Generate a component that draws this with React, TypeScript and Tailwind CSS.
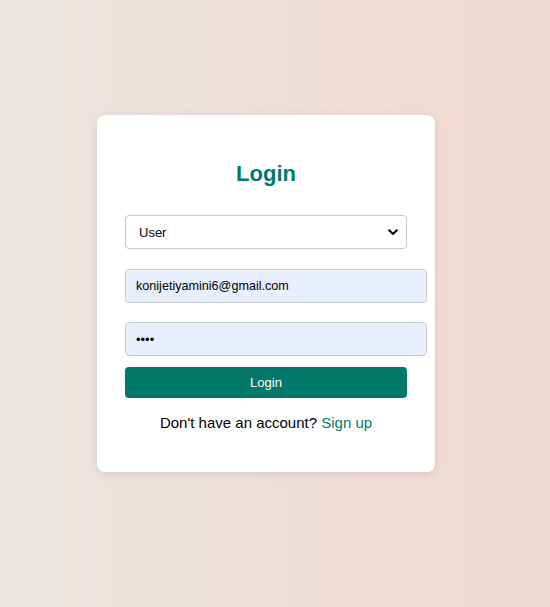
import React from "react";

export default function App() {
  return (
    <div
      className="min-h-[607px] w-full bg-[linear-gradient(to_right,#eae6e2,#f3d8cf)] pt-[115px] pl-[97px]"
      style={{ fontFamily: '"Liberation Sans", Arial, sans-serif' }}
    >
      <div className="w-[338px] h-[357px] bg-white rounded-[8px] shadow-[0_2px_10px_rgba(0,0,0,0.1)] px-[28px] pt-[45px] flex flex-col">
        <h2 className="text-[22px] leading-[28px] font-bold text-[#00796b] text-center">Login</h2>
        <div className="relative mt-[27px] w-[282px] h-[34px]">
          <select
            defaultValue="user"
            className="appearance-none w-full h-full border border-[#c8c8c8] rounded-[4px] bg-white pl-[13px] pt-[1px] text-[13px] text-black outline-none"
          >
            <option value="user">User</option>
            <option value="admin">Admin</option>
          </select>
          <svg
            className="absolute right-[9px] top-[14px] pointer-events-none"
            width="10"
            height="7"
            viewBox="0 0 10 7"
          >
            <path d="M1.2 1.3 L5 5 L8.8 1.3" fill="none" stroke="#000" strokeWidth="2" strokeLinecap="round" strokeLinejoin="round" />
          </svg>
        </div>
        <input
          type="email"
          defaultValue="konijetiyamini6@gmail.com"
          className="mt-[20px] w-[302px] h-[34px] bg-[#e8f0fe] border border-[#c9ccd3] rounded-[4px] px-[10px] text-[12.6px] text-black outline-none"
        />
        <input
          type="password"
          defaultValue="1234"
          className="mt-[19px] w-[302px] h-[34px] bg-[#e8f0fe] border border-[#c9ccd3] rounded-[4px] px-[10px] text-[13px] text-black outline-none"
        />
        <button className="mt-[11px] w-[282px] h-[31px] bg-[#00796b] rounded-[4px] text-white text-[13px]">
          Login
        </button>
        <p className="mt-[16px] text-[15px] leading-[18px] text-black text-center">
          Don't have an account? <span className="text-[#00796b]">Sign up</span>
        </p>
      </div>
    </div>
  );
}
